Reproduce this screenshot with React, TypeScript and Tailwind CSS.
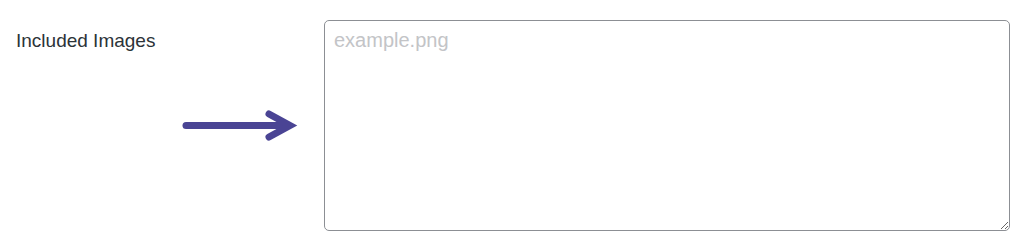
export default function App() {
  return (
    <div className="w-[1024px] h-[249px] bg-white flex pt-5 font-['Liberation_Sans',Arial,sans-serif]">
      <div className="w-[324px] pl-4 flex flex-col">
        <label
          htmlFor="included_images"
          className="mt-[7px] text-[19px] leading-[28px] text-[#2c3338]"
        >
          Included Images
        </label>
        <svg
          className="ml-[164px] mt-[53px]"
          width="120"
          height="36"
          viewBox="0 0 120 36"
          fill="none"
          stroke="#4a4494"
          strokeWidth="7"
          strokeLinecap="round"
        >
          <path d="M6 17.5 H106" />
          <path d="M89 6 L110 17.5 L89 29" strokeLinejoin="miter" />
        </svg>
      </div>
      <textarea
        id="included_images"
        placeholder="example.png"
        className="w-[686px] h-[211px] border-[1.5px] border-[#8c8f94] rounded-[5px] px-[9px] py-[5px] text-[20px] leading-[28px] text-[#2c3338] placeholder:text-[#c3c4c7] outline-none"
      />
    </div>
  )
}
